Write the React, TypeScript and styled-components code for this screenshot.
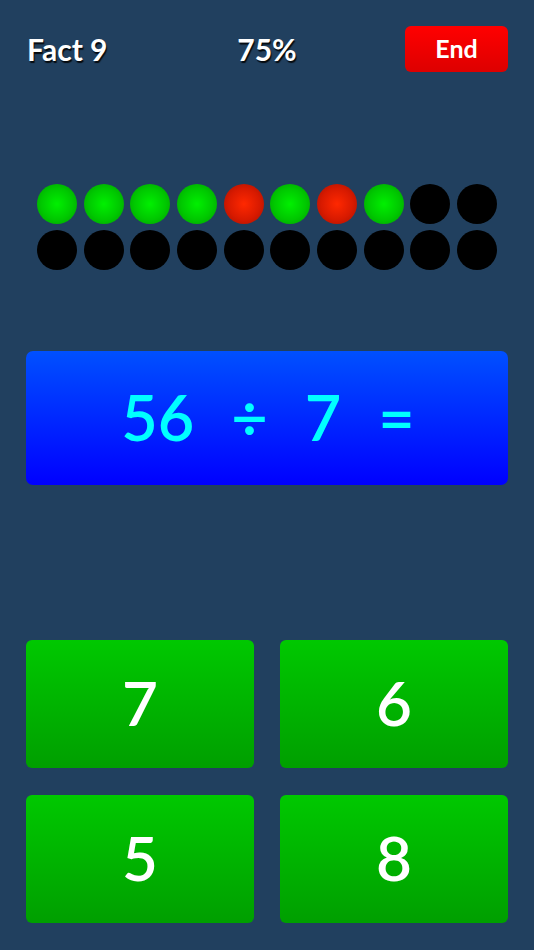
import styled, { createGlobalStyle } from 'styled-components';

const GlobalStyle = createGlobalStyle`
    html, body {
        margin: 0;
        padding: 0;
        background: #21405f;
    }
`

const Screen = styled.div`
    width: 534px;
    height: 950px;
    background-color: #21405f;
    font-family: Lato, "Open Sans", sans-serif;
    color: white;
    display: flex;
    flex-direction: column;
    box-sizing: border-box;
    padding: 26px 26px 0 26px;
    overflow: hidden;
`
const TopBar = styled.div`
    display: grid;
    grid-template-columns: 1fr auto 1fr;
    align-items: center;
    height: 46px;
`
const Label = styled.div<{ $align: string }>`
    justify-self: ${p => p.$align};
    font-size: 30px;
    font-weight: 700;
    text-shadow: 1px 2px 1px rgba(0, 0, 0, 0.85);
    padding-left: ${p => (p.$align === 'start' ? '1px' : '0')};
`
const EndButton = styled.button`
    justify-self: end;
    width: 103px;
    height: 46px;
    border: none;
    border-radius: 6px;
    background: linear-gradient(#ff0000, #dd0000);
    color: white;
    font-family: Lato, "Open Sans", sans-serif;
    font-size: 25px;
    font-weight: 700;
    padding: 0 0 2px 0;
`
const Dots = styled.div`
    display: grid;
    grid-template-columns: repeat(10, 40px);
    column-gap: 6.67px;
    row-gap: 6px;
    margin: 112px 11px 0 11px;
`
const Dot = styled.div<{ $state: 'ok' | 'bad' | 'none' }>`
    width: 40px;
    height: 40px;
    border-radius: 50%;
    background: ${p =>
        p.$state === 'ok'
            ? 'radial-gradient(circle at 50% 50%, #00f000 0%, #00c800 55%, #009a00 100%)'
            : p.$state === 'bad'
            ? 'radial-gradient(circle at 50% 50%, #ff2800 0%, #d81a00 55%, #a31000 100%)'
            : '#000'};
`
const Question = styled.div`
    margin-top: 81px;
    height: 134px;
    border-radius: 7px;
    background: linear-gradient(#0050ff, #0000ff);
    display: flex;
    align-items: center;
    justify-content: center;
    gap: 37px;
    color: #00ffff;
    font-size: 63px;
    font-weight: 600;
    padding: 0 0 4px 2px;
    box-sizing: border-box;
`
const Answers = styled.div`
    margin-top: 155px;
    display: grid;
    grid-template-columns: 1fr 1fr;
    grid-auto-rows: 128px;
    column-gap: 26px;
    row-gap: 27px;
`
const Answer = styled.button`
    border: none;
    border-radius: 6px;
    background: linear-gradient(#00c800, #009f00);
    color: white;
    font-family: Lato, "Open Sans", sans-serif;
    font-size: 62px;
    font-weight: 600;
    padding: 0 0 5px 0;
`

const results: ('ok' | 'bad' | 'none')[] = [
    'ok', 'ok', 'ok', 'ok', 'bad', 'ok', 'bad', 'ok', 'none', 'none',
    'none', 'none', 'none', 'none', 'none', 'none', 'none', 'none', 'none', 'none',
]

const App = () => {
    return <>
        <GlobalStyle />
        <Screen>
            <TopBar>
                <Label $align="start">Fact 9</Label>
                <Label $align="center">75%</Label>
                <EndButton>End</EndButton>
            </TopBar>
            <Dots>
                {results.map((r, i) => <Dot key={i} $state={r} />)}
            </Dots>
            <Question>
                <span>56</span>
                <span>÷</span>
                <span>7</span>
                <span>=</span>
            </Question>
            <Answers>
                <Answer>7</Answer>
                <Answer>6</Answer>
                <Answer>5</Answer>
                <Answer>8</Answer>
            </Answers>
        </Screen>
    </>;
}

export default App;
